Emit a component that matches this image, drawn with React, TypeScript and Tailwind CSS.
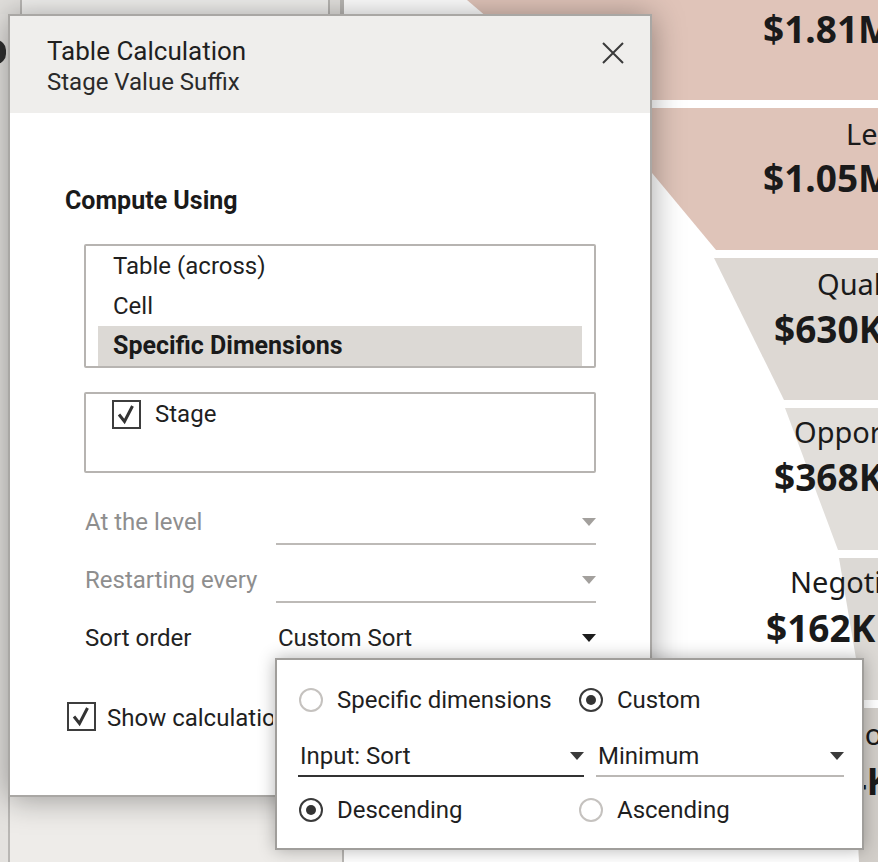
import React from "react";

const UI = "font-[Roboto,'Liberation_Sans',sans-serif]";

function Caret({ color }: { color: string }) {
  return (
    <svg width="14" height="8" viewBox="0 0 14 8" className="shrink-0">
      <path d="M0 0h14L7 8z" fill={color} />
    </svg>
  );
}

function CheckBox() {
  return (
    <span className="flex h-[29px] w-[29px] shrink-0 items-center justify-center border-2 border-[#3d3d3d] bg-white">
      <svg width="25" height="25" viewBox="0 0 25 25">
        <path d="M5 12.5L10.5 19.5L18.5 4" stroke="#333" strokeWidth="3" fill="none" />
      </svg>
    </span>
  );
}

function Radio({ checked }: { checked?: boolean }) {
  if (checked) {
    return (
      <span className="flex h-6 w-6 shrink-0 items-center justify-center rounded-full border-2 border-[#3a3a3a]">
        <span className="h-[10px] w-[10px] rounded-full bg-[#333]" />
      </span>
    );
  }
  return <span className="h-6 w-6 shrink-0 rounded-full border-2 border-[#c5c2bf]" />;
}

function FormRow({
  label,
  value,
  disabled
}: {
  label: string;
  value?: string;
  disabled?: boolean;
}) {
  return (
    <div className="flex h-[46px] items-end">
      <div
        className={
          disabled
            ? "w-[192px] whitespace-nowrap pb-[8px] pl-[1px] text-[24px] leading-[30px] text-[#8e8e8e]"
            : "w-[192px] whitespace-nowrap pb-[8px] pl-[1px] text-[24px] leading-[30px] text-[#222]"
        }
      >
        {label}
      </div>
      <div className="flex h-[46px] w-[320px] items-end justify-between border-b-2 border-[#bdbab7] pb-[6px] pl-[2px]">
        <span className="text-[24px] leading-[30px] text-[#222]">{value}</span>
        <span className="mb-[11px]">
          <Caret color={disabled ? "#a3a09d" : "#1c1c1c"} />
        </span>
      </div>
    </div>
  );
}

function Funnel() {
  return (
    <svg width="535" height="862" viewBox="343 0 535 862" className="block">
      <rect x="343" y="0" width="535" height="862" fill="#ffffff" />
      <polygon points="466,0 583,100 900,100 900,0" fill="#e0c4b9" />
      <polygon points="597,108 715,250 900,250 900,108" fill="#dfc4b9" />
      <polygon points="713,258 783,400 900,400 900,258" fill="#ddd8d3" />
      <polygon points="784,408 837,550 900,550 900,408" fill="#e1deda" />
      <polygon points="838,558 862,700 900,700 900,558" fill="#dcd9d5" />
      <polygon points="850,708 858,862 900,862 900,708" fill="#d2cec9" />
      <g fontFamily="'Noto Sans', 'Open Sans', sans-serif" fill="#1a1a1a">
        <text x="762" y="43" fontSize="37" fontWeight="700">$1.81M</text>
        <text x="845" y="145" fontSize="29">Lead</text>
        <text x="762" y="192" fontSize="37" fontWeight="700">$1.05M</text>
        <text x="816" y="295" fontSize="29">Qualified</text>
        <text x="773" y="343" fontSize="37" fontWeight="700">$630K</text>
        <text x="793" y="443" fontSize="29">Opportunity</text>
        <text x="773" y="491" fontSize="37" fontWeight="700">$368K</text>
        <text x="789" y="593" fontSize="29">Negotiation</text>
        <text x="765" y="642" fontSize="37" fontWeight="700">$162K</text>
        <text x="838" y="745" fontSize="29">Closed</text>
        <text x="802" y="795" fontSize="37" fontWeight="700">$84K</text>
      </g>
    </svg>
  );
}

function Background() {
  return (
    <div className="flex h-[862px] w-[878px]">
      <div className="flex w-[343px] flex-col bg-[#e6e4e1]">
        <div className="flex h-[14px] shrink-0">
          <div className="w-[22px] border-r-2 border-[#b9b7b4] bg-[#e2e0dd]" />
          <div className="w-[306px] bg-[#f1f0ee]" />
          <div className="w-[14px] border-x-2 border-[#b9b7b4] bg-[#e4e2df]" />
        </div>
        <div className="flex flex-1">
          <div className="w-[8px] shrink-0 bg-[#e4e2df] pt-[26px]">
            <div className="-ml-[14px] h-[24px] w-[20px] rounded-full bg-[#2f2f2f]" />
          </div>
          <div className="flex-1 border-l-2 border-[#b9b7b4] bg-[#eeece9]" />
        </div>
      </div>
      <div className="border-l-2 border-[#b9b7b4]">
        <Funnel />
      </div>
    </div>
  );
}

export default function App() {
  return (
    <div className={`relative h-[862px] w-[878px] overflow-hidden ${UI} text-[#1f1f1f]`}>
      <Background />

      {/* Table calculation dialog */}
      <div className="absolute left-[8px] top-[14px] flex h-[783px] w-[644px] flex-col border-2 border-[#a9a7a4] bg-white shadow-[0_2px_30px_rgba(0,0,0,0.36)]">
        <div className="flex h-[97px] shrink-0 justify-between bg-[#efeeec] pl-[37px] pr-[26px]">
          <div className="pt-[20px]">
            <div className="text-[26px] leading-[30px] text-[#1f1f1f]">Table Calculation</div>
            <div className="mt-[1px] text-[24px] leading-[30px] text-[#2a2a2a]">Stage Value Suffix</div>
          </div>
          <svg width="22" height="22" viewBox="0 0 22 22" className="mt-[26px]">
            <path d="M1 1L21 21M21 1L1 21" stroke="#3a3a3a" strokeWidth="2" fill="none" />
          </svg>
        </div>

        <div className="flex flex-col pl-[55px] pt-[75px]">
          <div className="text-[25px] font-bold leading-[26px] text-[#1a1a1a]">Compute Using</div>

          <div className="ml-[19px] mt-[30px] h-[124px] w-[512px] rounded-[2px] border-2 border-[#b7b4b1] px-[12px]">
            <div className="h-[40px] pl-[15px] text-[24px] leading-[40px]">Table (across)</div>
            <div className="h-[40px] pl-[15px] text-[24px] leading-[40px]">Cell</div>
            <div className="h-[40px] bg-[#dcd9d5] pl-[15px] text-[25px] font-bold leading-[40px] text-[#1a1a1a]">
              Specific Dimensions
            </div>
          </div>

          <div className="ml-[19px] mt-[24px] h-[81px] w-[512px] rounded-[2px] border-2 border-[#b7b4b1] pl-[26px] pt-[6px]">
            <div className="flex items-center gap-[14px]">
              <CheckBox />
              <span className="text-[24px] leading-[29px]">Stage</span>
            </div>
          </div>

          <div className="ml-[19px] mt-[26px] flex flex-col gap-[12px]">
            <FormRow label="At the level" disabled />
            <FormRow label="Restarting every" disabled />
            <FormRow label="Sort order" value="Custom Sort" />
          </div>

          <div className="ml-[2px] mt-[39px] flex items-center gap-[11px]">
            <CheckBox />
            <span className="mt-[4px] w-[166px] overflow-hidden whitespace-nowrap text-[24px] leading-[29px]">
              Show calculation assistance
            </span>
          </div>
        </div>
      </div>

      {/* Custom sort popup */}
      <div className="absolute left-[275px] top-[658px] h-[192px] w-[589px] border-2 border-[#a09e9b] bg-white pl-[22px] pr-[18px] pt-[28px] shadow-[0_0_16px_rgba(0,0,0,0.3)]">
        <div className="flex h-[24px]">
          <div className="flex w-[280px] items-center gap-[14px]">
            <Radio />
            <span className="whitespace-nowrap text-[24px] leading-[24px]">Specific dimensions</span>
          </div>
          <div className="flex items-center gap-[14px]">
            <Radio checked />
            <span className="text-[24px] leading-[24px]">Custom</span>
          </div>
        </div>

        <div className="-ml-[1px] mt-[31px] flex gap-[12px]">
          <div className="flex h-[34px] w-[286px] items-center justify-between border-b-2 border-[#333] pb-[7px] pl-[2px]">
            <span className="text-[24px] leading-[30px]">Input: Sort</span>
            <Caret color="#3a3a3a" />
          </div>
          <div className="flex h-[34px] w-[248px] items-center justify-between border-b-2 border-[#bbb8b5] pb-[7px] pl-[2px]">
            <span className="text-[24px] leading-[30px]">Minimum</span>
            <Caret color="#3a3a3a" />
          </div>
        </div>

        <div className="mt-[21px] flex h-[24px]">
          <div className="flex w-[280px] items-center gap-[14px]">
            <Radio checked />
            <span className="text-[24px] leading-[24px]">Descending</span>
          </div>
          <div className="flex items-center gap-[14px]">
            <Radio />
            <span className="text-[24px] leading-[24px]">Ascending</span>
          </div>
        </div>
      </div>
    </div>
  );
}
